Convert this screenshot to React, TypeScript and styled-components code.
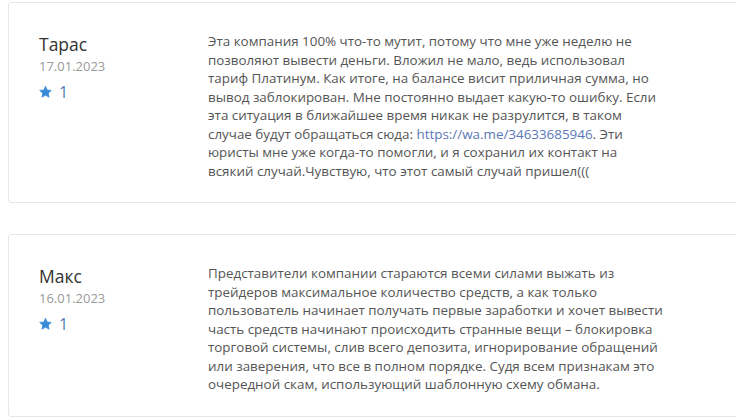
import React from 'react';
import styled, { createGlobalStyle } from 'styled-components';

const GlobalStyle = createGlobalStyle`
  body {
    margin: 0;
    background: #ffffff;
    font-family: "Open Sans", "Liberation Sans", Arial, sans-serif;
  }
`;

// Styled components

const List = styled.div`
  display: flex;
  flex-direction: column;
  gap: 31px;
  padding: 2px 0 0 8px;
`;

const Card = styled.div`
  display: flex;
  width: 760px;
  box-sizing: border-box;
  padding: 29px 30px 22px 30px;
  border: 1px solid #e6e6e6;
  border-radius: 3px;
  background: #fff;
`;

const Author = styled.div`
  width: 169px;
  flex-shrink: 0;
  padding-top: 1px;
`;

const Name = styled.div`
  font-size: 17.5px;
  line-height: 22px;
  color: #333333;
`;

const DateText = styled.div`
  margin-top: 1px;
  font-size: 13px;
  line-height: 20px;
  color: #9a9a9a;
`;

const Rating = styled.div`
  display: flex;
  align-items: center;
  gap: 7px;
  margin-top: 5px;
  font-size: 16px;
  line-height: 22px;
  color: #4f7fae;
`;

const Body = styled.p`
  margin: 0;
  width: 458px;
  font-size: 13.4px;
  line-height: 18.5px;
  color: #555555;
`;

const Link = styled.a`
  color: #5a78b8;
  text-decoration: none;
`;

type Review = {
  name: string;
  date: string;
  rating: number;
  text: React.ReactNode;
};

const reviews: Review[] = [
  {
    name: 'Тарас',
    date: '17.01.2023',
    rating: 1,
    text: (
      <>
        Эта компания 100% что-то мутит, потому что мне уже неделю не позволяют вывести деньги.
        Вложил не мало, ведь использовал тариф Платинум. Как итоге, на балансе висит приличная
        сумма, но вывод заблокирован. Мне постоянно выдает какую-то ошибку. Если эта ситуация в
        ближайшее время никак не разрулится, в таком случае будут обращаться сюда:{' '}
        <Link href="#">https://wa.me/34633685946</Link>. Эти юристы мне уже когда-то помогли, и я
        сохранил их контакт на всякий случай.Чувствую, что этот самый случай пришел(((
      </>
    ),
  },
  {
    name: 'Макс',
    date: '16.01.2023',
    rating: 1,
    text: (
      <>
        Представители компании стараются всеми силами выжать из трейдеров максимальное количество
        средств, а как только пользователь начинает получать первые заработки и хочет вывести часть
        средств начинают происходить странные вещи – блокировка торговой системы, слив всего
        депозита, игнорирование обращений или заверения, что все в полном порядке. Судя всем
        признакам это очередной скам, использующий шаблонную схему обмана.
      </>
    ),
  },
];

function Star() {
  return (
    <svg width="13" height="12" viewBox="0 0 24 23" aria-hidden>
      <path
        d="M12 0.5l3.4 7 7.8 1-5.7 5.3 1.5 7.8L12 17.8l-7 3.8 1.5-7.8L0.8 8.5l7.8-1z"
        fill="#3a8bd5"
        stroke="#3a8bd5"
        strokeWidth="1.2"
        strokeLinejoin="round"
      />
    </svg>
  );
}

export default function App() {
  return (
    <>
      <GlobalStyle />
      <List>
        {reviews.map((r) => (
          <Card key={r.name}>
            <Author>
              <Name>{r.name}</Name>
              <DateText>{r.date}</DateText>
              <Rating>
                <Star />
                <span>{r.rating}</span>
              </Rating>
            </Author>
            <Body>{r.text}</Body>
          </Card>
        ))}
      </List>
    </>
  );
}
